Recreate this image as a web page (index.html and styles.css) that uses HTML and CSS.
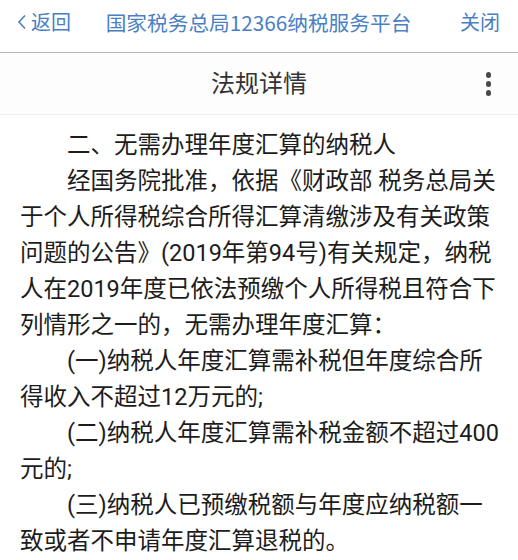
FILE: index.html
```html
<!DOCTYPE html>
<html lang="zh-CN">

<head>
    <meta charset="UTF-8">
    <meta name="viewport" content="width=device-width, initial-scale=1.0">
    <title>法规详情</title>
    <link rel="stylesheet" href="styles.css">
</head>

<body>
    <div class="topbar">
        <a class="top-link back">
            <svg class="chevron" viewBox="0 0 10 16" width="10" height="16">
                <path d="M8 1.5 L2 8 L8 14.5" fill="none" stroke="currentColor" stroke-width="1.6" />
            </svg>返回
        </a>
        <div class="top-title">国家税务总局12366纳税服务平台</div>
        <a class="top-link close">关闭</a>
    </div>

    <div class="header">
        <h2 class="header-title">法规详情</h2>
        <button class="more" aria-label="更多">
            <span class="dot"></span>
            <span class="dot"></span>
            <span class="dot"></span>
        </button>
    </div>

    <div class="article">
        <p>二、无需办理年度汇算的纳税人</p>
        <p>经国务院批准，依据《财政部 税务总局关于个人所得税综合所得汇算清缴涉及有关政策问题的公告》(2019年第94号)有关规定，纳税人在2019年度已依法预缴个人所得税且符合下列情形之一的，无需办理年度汇算：</p>
        <p>(一)纳税人年度汇算需补税但年度综合所得收入不超过12万元的;</p>
        <p>(二)纳税人年度汇算需补税金额不超过400元的;</p>
        <p>(三)纳税人已预缴税额与年度应纳税额一致或者不申请年度汇算退税的。</p>
    </div>
</body>

</html>
```

FILE: styles.css
```css
* {
    box-sizing: border-box;
}

:root {
    --color-link: #4a7fc4;
    --color-text: #1c1c1c;
    --color-title: #333;
}

body {
    margin: 0;
    background-color: #fff;
    font-family: Roboto, "Noto Sans CJK SC", sans-serif;
    color: var(--color-text);
}

.topbar {
    display: flex;
    align-items: center;
    justify-content: space-between;
    height: 53px;
    padding: 0 18px 9px 17px;
    border-bottom: 1px solid #b3b3b3;
    color: var(--color-link);
    font-size: 20px;
    background-color: #fff;
}

.top-link {
    display: flex;
    align-items: center;
    text-decoration: none;
}

.back {
    width: 70px;
}

.chevron {
    margin-right: 4px;
}

.close {
    width: 70px;
    justify-content: flex-end;
}

.top-title {
    font-size: 20.7px;
    font-family: "Noto Sans CJK SC", serif;
}

.header {
    position: relative;
    display: flex;
    align-items: center;
    justify-content: center;
    height: 62px;
    padding-bottom: 4px;
    background-color: #fdfdfd;
    border-bottom: 1px solid #efefef;
}

.header-title {
    margin: 0;
    font-size: 24px;
    font-weight: normal;
    color: var(--color-title);
}

.more {
    position: absolute;
    right: 27px;
    top: 19px;
    display: flex;
    flex-direction: column;
    gap: 3.5px;
    padding: 0;
    border: 0;
    background: none;
}

.dot {
    width: 5.5px;
    height: 5.5px;
    border-radius: 50%;
    background-color: #4a4a4a;
}

.article {
    padding: 12px 16px 0 20px;
    font-size: 23.5px;
    line-height: 36px;
}

.article p {
    margin: 0;
    text-indent: 2em;
}
```
